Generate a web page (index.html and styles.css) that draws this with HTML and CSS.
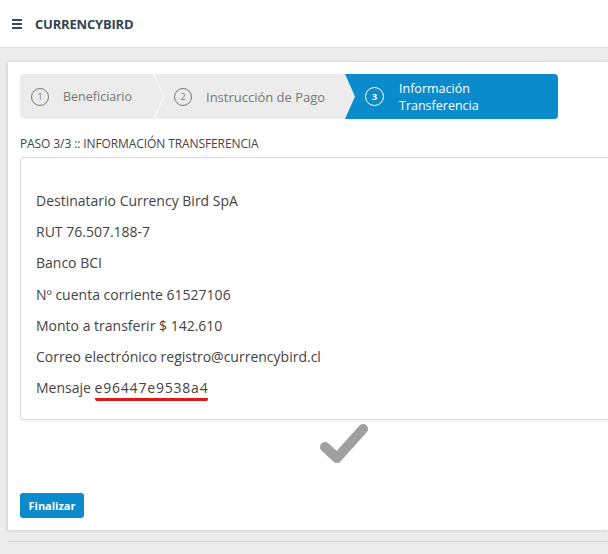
FILE: index.html
```html
<!DOCTYPE html>
<html lang="es">
<head>
  <meta charset="UTF-8" />
  <meta name="viewport" content="width=device-width, initial-scale=1.0"/>
  <title>CurrencyBird</title>
  <link rel="stylesheet" href="styles.css">
</head>
<body>
  <header class="topbar">
    <span class="menu"><i></i><i></i><i></i></span>
    <span class="brand">CURRENCYBIRD</span>
  </header>

  <div class="page">
    <div class="card">
      <div class="steps">
        <div class="step step-1">
          <span class="num">1</span>
          <span class="label">Beneficiario</span>
        </div>
        <svg class="sep" width="12" height="45" viewBox="0 0 12 45">
          <polyline points="0.5,0 11,22.5 0.5,45" fill="none" stroke="#ffffff" stroke-width="1"/>
        </svg>
        <div class="step step-2">
          <span class="num">2</span>
          <span class="label">Instrucción de Pago</span>
        </div>
        <div class="step step-3 active">
          <span class="num">3</span>
          <span class="label">Información<br>Transferencia</span>
        </div>
      </div>

      <div class="paso">PASO 3/3 :: INFORMACIÓN TRANSFERENCIA</div>

      <div class="info-box">
        <p>Destinatario Currency Bird SpA</p>
        <p>RUT 76.507.188-7</p>
        <p>Banco BCI</p>
        <p>Nº cuenta corriente 61527106</p>
        <p>Monto a transferir $ 142.610</p>
        <p>Correo electrónico registro@currencybird.cl</p>
        <p>Mensaje <span class="code">e96447e9538a4</span></p>
      </div>

      <div class="done">
        <svg width="56" height="48" viewBox="0 0 56 48">
          <polyline points="9,27 21,38 47,9" fill="none" stroke="#a0a0a0" stroke-width="10" stroke-linecap="round" stroke-linejoin="round"/>
        </svg>
      </div>

      <button class="btn">Finalizar</button>
    </div>
    <div class="footer"></div>
  </div>
</body>
</html>
```

FILE: styles.css
```css
body {
  margin: 0;
  background-color: #ececec;
  font-family: 'Open Sans', 'Liberation Sans', sans-serif;
  color: #444;
  overflow: hidden;
}

.topbar {
  height: 48px;
  background-color: #fff;
  border-bottom: 1px solid #e2e2e2;
  display: flex;
  align-items: center;
  padding-left: 12px;
  box-sizing: border-box;
}

.menu {
  display: flex;
  flex-direction: column;
  gap: 2px;
  width: 10px;
  margin-right: 13px;
}

.menu i {
  display: block;
  height: 2px;
  background-color: #3b4a54;
}

.brand {
  font-weight: 700;
  font-size: 13px;
  color: #33434e;
  letter-spacing: -0.2px;
}

.page {
  padding: 13px 0 0 8px;
}

.card {
  background-color: #fff;
  border-top: 1px solid #dcdcdc;
  box-shadow: -1px 1px 3px rgba(0, 0, 0, 0.12);
  padding: 12px 0 12px 12px;
  box-sizing: border-box;
  height: 469px;
  overflow: hidden;
}

.steps {
  display: flex;
  width: 538px;
  height: 45px;
  background-color: #ececec;
  border-radius: 4px;
}

.step {
  display: flex;
  align-items: center;
  font-size: 12.5px;
  color: #777;
}

.step-1 {
  width: 133px;
  padding-left: 11px;
  box-sizing: border-box;
}

.step-2 {
  width: 180px;
  padding-left: 9px;
  box-sizing: border-box;
  font-size: 13px;
}

.step-3 {
  width: 213px;
  padding-left: 20px;
  box-sizing: border-box;
  background-color: #0a8bcc;
  color: #fff;
  border-radius: 0 4px 4px 0;
  clip-path: polygon(0 0, 100% 0, 100% 100%, 0 100%, 10px 50%);
  line-height: 17px;
}

.num {
  width: 16px;
  height: 16px;
  border: 1px solid #777;
  border-radius: 50%;
  display: flex;
  justify-content: center;
  align-items: center;
  font-size: 9px;
  margin-right: 14px;
  flex-shrink: 0;
}

.step-3 .num {
  width: 17px;
  height: 17px;
  border: 1.5px solid #fff;
  font-weight: 700;
  margin-right: 15px;
}

.sep {
  flex-shrink: 0;
  display: block;
}

.paso {
  font-size: 12px;
  color: #444;
  margin: 16px 0 5px;
  letter-spacing: -0.1px;
}

.info-box {
  border: 1px solid #d6dce2;
  border-radius: 3px;
  padding: 27px 15px 16px;
  margin-right: -20px;
  box-shadow: 0 1px 2px rgba(0, 0, 0, 0.05);
}

.info-box p {
  margin: 0;
  height: 31.2px;
  line-height: 31px;
  font-size: 14px;
  color: #444;
}

.code {
  display: inline-block;
  line-height: 20px;
  letter-spacing: 0.8px;
  border-bottom: 3px solid #e0161b;
  border-radius: 2px;
}

.done {
  display: flex;
  justify-content: center;
  padding-left: 60px;
}

.done svg {
  display: block;
}

.btn {
  margin-top: 25px;
  background-color: #0a8bcc;
  color: #fff;
  border: none;
  border-radius: 3px;
  font-family: 'Open Sans', 'Liberation Sans', sans-serif;
  font-weight: 700;
  font-size: 11px;
  width: 64px;
  height: 25px;
  padding: 0;
  cursor: pointer;
}

.footer {
  margin-top: 11px;
  border-top: 1px solid #d6d6d6;
  height: 20px;
}
```
